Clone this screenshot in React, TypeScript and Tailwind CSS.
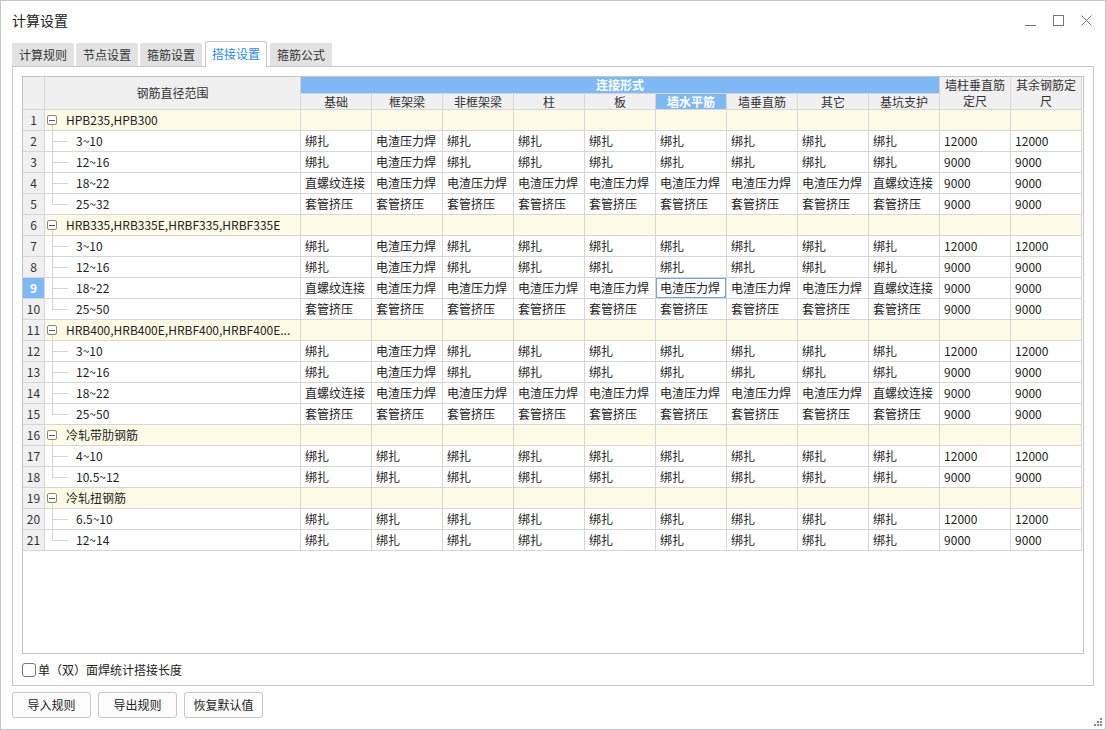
import React from "react";

const B = "绑扎";
const D = "电渣压力焊";
const Z = "直螺纹连接";
const T = "套管挤压";

const cols = ["基础", "框架梁", "非框架梁", "柱", "板", "墙水平筋", "墙垂直筋", "其它", "基坑支护"];

const v1 = [B, D, B, B, B, B, B, B, B, "12000", "12000"];
const v2 = [B, D, B, B, B, B, B, B, B, "9000", "9000"];
const v3 = [Z, D, D, D, D, D, D, D, Z, "9000", "9000"];
const v4 = [T, T, T, T, T, T, T, T, T, "9000", "9000"];
const v5 = [B, B, B, B, B, B, B, B, B, "12000", "12000"];
const v6 = [B, B, B, B, B, B, B, B, B, "9000", "9000"];

type Child = { range: string; vals: string[] };
type Group = { name: string; children: Child[] };

const groups: Group[] = [
    {
        name: "HPB235,HPB300",
        children: [
            { range: "3~10", vals: v1 },
            { range: "12~16", vals: v2 },
            { range: "18~22", vals: v3 },
            { range: "25~32", vals: v4 },
        ],
    },
    {
        name: "HRB335,HRB335E,HRBF335,HRBF335E",
        children: [
            { range: "3~10", vals: v1 },
            { range: "12~16", vals: v2 },
            { range: "18~22", vals: v3 },
            { range: "25~50", vals: v4 },
        ],
    },
    {
        name: "HRB400,HRB400E,HRBF400,HRBF400E...",
        children: [
            { range: "3~10", vals: v1 },
            { range: "12~16", vals: v2 },
            { range: "18~22", vals: v3 },
            { range: "25~50", vals: v4 },
        ],
    },
    {
        name: "冷轧带肋钢筋",
        children: [
            { range: "4~10", vals: v5 },
            { range: "10.5~12", vals: v6 },
        ],
    },
    {
        name: "冷轧扭钢筋",
        children: [
            { range: "6.5~10", vals: v5 },
            { range: "12~14", vals: v6 },
        ],
    },
];

const SEL_ROW = 9;
const SEL_COL = 5; // 墙水平筋

const cell = "border border-[#d6d6d6] p-0 h-[21px] leading-[20px] whitespace-nowrap overflow-hidden";

function NumCell({ n }: { n: number }) {
    const sel = n === SEL_ROW;
    return (
        <td className={`${cell} text-center ${sel ? "bg-[#7fb9f5] text-white font-bold" : "bg-[#f0f0f0] text-[#333]"}`}>
            {n}
        </td>
    );
}

function App() {
    let n = 0;
    const body: React.ReactNode[] = [];
    groups.forEach((g, gi) => {
        n += 1;
        body.push(
            <tr key={`g${gi}`}>
                <NumCell n={n} />
                <td className={`${cell} relative bg-[#fdfae6] text-[#222]`}>
                    <span className="absolute left-[2px] top-[5px] w-[10px] h-[10px] border border-[#888] rounded-[2px] bg-white flex items-center justify-center">
                        <span className="block w-[6px] h-px bg-[#555]" />
                    </span>
                    <span className="absolute left-[7px] top-[15px] -bottom-px w-px bg-[#d4d4d4]" />
                    <span className="pl-[21px] block truncate">{g.name}</span>
                </td>
                {Array.from({ length: 11 }).map((_, i) => (
                    <td key={i} className={`${cell} bg-[#fdfae6]`} />
                ))}
            </tr>
        );
        g.children.forEach((c, ci) => {
            n += 1;
            const last = ci === g.children.length - 1;
            const rowNo = n;
            body.push(
                <tr key={`c${gi}-${ci}`}>
                    <NumCell n={rowNo} />
                    <td className={`${cell} relative bg-white text-[#222]`}>
                        <span className={`absolute left-[7px] -top-px w-px bg-[#d4d4d4] ${last ? "h-[12px]" : "-bottom-px"}`} />
                        <span className="absolute left-[7px] top-[10px] w-[16px] h-px bg-[#d4d4d4]" />
                        <span className="pl-[31px] block">{c.range}</span>
                    </td>
                    {c.vals.map((v, i) => {
                        const sel = rowNo === SEL_ROW && i === SEL_COL;
                        return (
                            <td key={i} className={`${cell} ${sel ? "relative" : ""} bg-white text-[#222] pl-[4px]`}>
                                {v}
                                {sel && (
                                    <>
                                        <span className="absolute -left-px -top-px -right-px -bottom-px border-2 border-[#6aa8ec]" />
                                        <span className="absolute -right-[3px] -bottom-[3px] w-[5px] h-[5px] bg-[#6aa8ec]" />
                                    </>
                                )}
                            </td>
                        );
                    })}
                </tr>
            );
        });
    });

    return (
        <div className="w-[1106px] h-[730px] bg-white border border-[#c6c6c6] flex flex-col text-[12px] text-[#333] font-['Noto_Sans_CJK_SC','Microsoft_YaHei',sans-serif] relative overflow-hidden">
            {/* title bar */}
            <div className="h-[39px] flex items-center pl-[11px] pr-[13px] shrink-0">
                <span className="text-[14px] text-[#222]">计算设置</span>
                <div className="ml-auto flex items-center gap-[17px] text-[#777]">
                    <svg width="11" height="11" viewBox="0 0 11 11"><path d="M0 10.5H11" stroke="#777" strokeWidth="1" /></svg>
                    <svg width="11" height="11" viewBox="0 0 11 11"><rect x="0.5" y="0.5" width="10" height="10" fill="none" stroke="#777" /></svg>
                    <svg width="11" height="11" viewBox="0 0 11 11"><path d="M0.5 0.5L10.5 10.5M10.5 0.5L0.5 10.5" stroke="#777" /></svg>
                </div>
            </div>

            {/* tabs */}
            <div className="flex items-end gap-[2px] px-[11px] h-[26px] shrink-0">
                {["计算规则", "节点设置", "箍筋设置", "搭接设置", "箍筋公式"].map((t) =>
                    t === "搭接设置" ? (
                        <div key={t} className="h-[26px] px-[6px] mx-[1px] flex items-center bg-white border border-[#c6c6c6] border-b-0 rounded-t-[3px] text-[#2a8be8] relative z-10 -mb-px pb-px">
                            {t}
                        </div>
                    ) : (
                        <div key={t} className="h-[23px] px-[7px] flex items-center bg-[#e2e2e2] rounded-t-[2px] text-[#333]">
                            {t}
                        </div>
                    )
                )}
            </div>

            {/* panel */}
            <div className="mx-[11px] h-[620px] border border-[#c6c6c6] flex flex-col px-[9px] pt-[9px] shrink-0">
                <div className="h-[578px] border border-[#c4c4c4] bg-white overflow-hidden">
                    <table className="table-fixed border-collapse w-[1059px] -ml-px -mt-px">
                        <colgroup>
                            <col className="w-[22px]" />
                            <col className="w-[256px]" />
                            {Array.from({ length: 11 }).map((_, i) => (
                                <col key={i} className="w-[71px]" />
                            ))}
                        </colgroup>
                        <thead>
                            <tr>
                                <th rowSpan={2} className="border border-[#d6d6d6] bg-[#f0f0f0] p-0" />
                                <th rowSpan={2} className="border border-[#d6d6d6] bg-[#f0f0f0] p-0 font-normal text-[#333]">钢筋直径范围</th>
                                <th colSpan={9} className="border border-[#d6d6d6] bg-[#7fb9f5] p-0 h-[17px] leading-[16px] font-bold text-white">连接形式</th>
                                <th rowSpan={2} className="border border-[#d6d6d6] bg-[#f0f0f0] px-[2px] py-0 font-normal text-[#333] leading-[16px]">墙柱垂直筋定尺</th>
                                <th rowSpan={2} className="border border-[#d6d6d6] bg-[#f0f0f0] px-[2px] py-0 font-normal text-[#333] leading-[16px]">其余钢筋定尺</th>
                            </tr>
                            <tr>
                                {cols.map((c, i) => (
                                    <th
                                        key={c}
                                        className={`border border-[#d6d6d6] p-0 h-[16px] leading-[15px] whitespace-nowrap ${
                                            i === SEL_COL ? "bg-[#7fb9f5] text-white font-bold" : "bg-[#f0f0f0] text-[#333] font-normal"
                                        }`}
                                    >
                                        {c}
                                    </th>
                                ))}
                            </tr>
                        </thead>
                        <tbody>{body}</tbody>
                    </table>
                </div>
                <label className="flex items-center gap-[2px] mt-[7px] text-[#222] text-[12px]">
                    <span className="w-[14px] h-[14px] border border-[#777] rounded-[3px] bg-white" />
                    单（双）面焊统计搭接长度
                </label>
            </div>

            {/* buttons */}
            <div className="flex gap-[7px] px-[11px] mt-[6px]">
                {["导入规则", "导出规则", "恢复默认值"].map((t) => (
                    <button key={t} className="h-[26px] w-[79px] border border-[#c6c6c6] rounded-[3px] bg-[#fdfdfd] text-[#222] text-[12px]">
                        {t}
                    </button>
                ))}
            </div>

            {/* resize grip */}
            <svg className="absolute right-[3px] bottom-[3px]" width="8" height="8" viewBox="0 0 8 8">
                <rect x="6" y="0" width="2" height="2" fill="#888" />
                <rect x="3" y="3" width="2" height="2" fill="#888" />
                <rect x="6" y="3" width="2" height="2" fill="#888" />
                <rect x="0" y="6" width="2" height="2" fill="#888" />
                <rect x="3" y="6" width="2" height="2" fill="#888" />
                <rect x="6" y="6" width="2" height="2" fill="#888" />
            </svg>
        </div>
    );
}

export default App;
